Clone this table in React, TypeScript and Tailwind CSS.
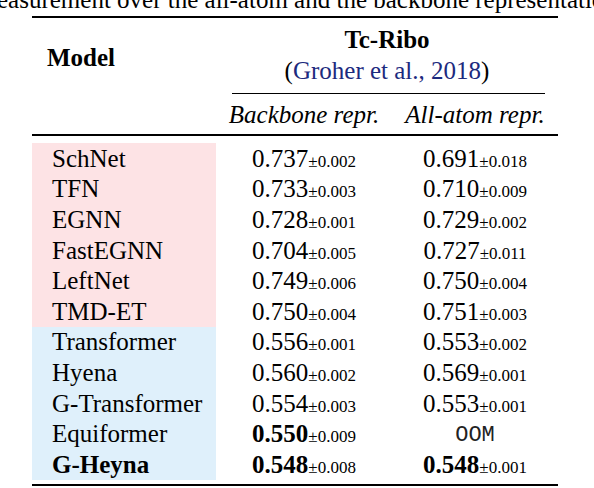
import React from 'react';

type Row = {
  name: string;
  bold?: boolean;
  backbone: [string, string, boolean?];
  allAtom: [string, string, boolean?] | 'OOM';
};

const equivariant: Row[] = [
  { name: 'SchNet', backbone: ['0.737', '±0.002'], allAtom: ['0.691', '±0.018'] },
  { name: 'TFN', backbone: ['0.733', '±0.003'], allAtom: ['0.710', '±0.009'] },
  { name: 'EGNN', backbone: ['0.728', '±0.001'], allAtom: ['0.729', '±0.002'] },
  { name: 'FastEGNN', backbone: ['0.704', '±0.005'], allAtom: ['0.727', '±0.011'] },
  { name: 'LeftNet', backbone: ['0.749', '±0.006'], allAtom: ['0.750', '±0.004'] },
  { name: 'TMD-ET', backbone: ['0.750', '±0.004'], allAtom: ['0.751', '±0.003'] },
];

const sequence: Row[] = [
  { name: 'Transformer', backbone: ['0.556', '±0.001'], allAtom: ['0.553', '±0.002'] },
  { name: 'Hyena', backbone: ['0.560', '±0.002'], allAtom: ['0.569', '±0.001'] },
  { name: 'G-Transformer', backbone: ['0.554', '±0.003'], allAtom: ['0.553', '±0.001'] },
  { name: 'Equiformer', backbone: ['0.550', '±0.009', true], allAtom: 'OOM' },
  { name: 'G-Heyna', bold: true, backbone: ['0.548', '±0.008', true], allAtom: ['0.548', '±0.001', true] },
];

function Score({ v }: { v: [string, string, boolean?] | 'OOM' }) {
  if (v === 'OOM') {
    return <span className="font-['Liberation_Mono',monospace] text-[22px] text-[#222]">OOM</span>;
  }
  return (
    <span className="whitespace-nowrap">
      <span className={v[2] ? 'font-bold' : ''}>{v[0]}</span>
      <span className="text-[17px]">{v[1]}</span>
    </span>
  );
}

function TableRow({ row, tint }: { row: Row; tint: string }) {
  return (
    <div className="grid grid-cols-[184px_176px_166px] h-[30.6px] items-center">
      <div className={`${tint} h-full flex items-center pl-[20px] ${row.bold ? 'font-bold' : ''}`}>
        {row.name}
      </div>
      <div className="text-center">
        <Score v={row.backbone} />
      </div>
      <div className="text-center">
        <Score v={row.allAtom} />
      </div>
    </div>
  );
}

export default function App() {
  return (
    <div className="w-[594px] h-[488px] bg-white overflow-hidden font-['Liberation_Serif',serif] text-[25px] leading-none text-black">
      {/* caption cut off by the crop */}
      <div className="mt-[-14px] ml-[-3px] whitespace-nowrap h-[27px] leading-[27px]">
        easurement over the all-atom and the backbone representation
      </div>

      <div className="ml-[32px] w-[526px] mt-[3px]">
        <div className="h-[2px] bg-black" />

        {/* header */}
        <div className="grid grid-cols-[184px_342px] h-[116px]">
          <div className="font-bold pl-[15px] pt-[27px]">Model</div>
          <div className="flex flex-col">
            <div className="text-center font-bold pt-[9px]">Tc-Ribo</div>
            <div className="text-center pt-[6px]">
              (<span className="text-[#1c2a7e]">Groher et al., 2018</span>)
            </div>
            <div className="ml-[16px] mr-[13px] mt-[10px] h-px bg-black" />
            <div className="grid grid-cols-[176px_166px] italic pt-[8px]">
              <div className="text-center">Backbone repr.</div>
              <div className="text-center">All-atom repr.</div>
            </div>
          </div>
        </div>

        <div className="h-[2px] bg-black" />
        <div className="h-[7px]" />

        {equivariant.map((r) => (
          <TableRow key={r.name} row={r} tint="bg-[#fde3e5]" />
        ))}
        {sequence.map((r) => (
          <TableRow key={r.name} row={r} tint="bg-[#dff0fb]" />
        ))}

        <div className="h-[4px]" />
        <div className="h-[2px] bg-black" />
      </div>
    </div>
  );
}
